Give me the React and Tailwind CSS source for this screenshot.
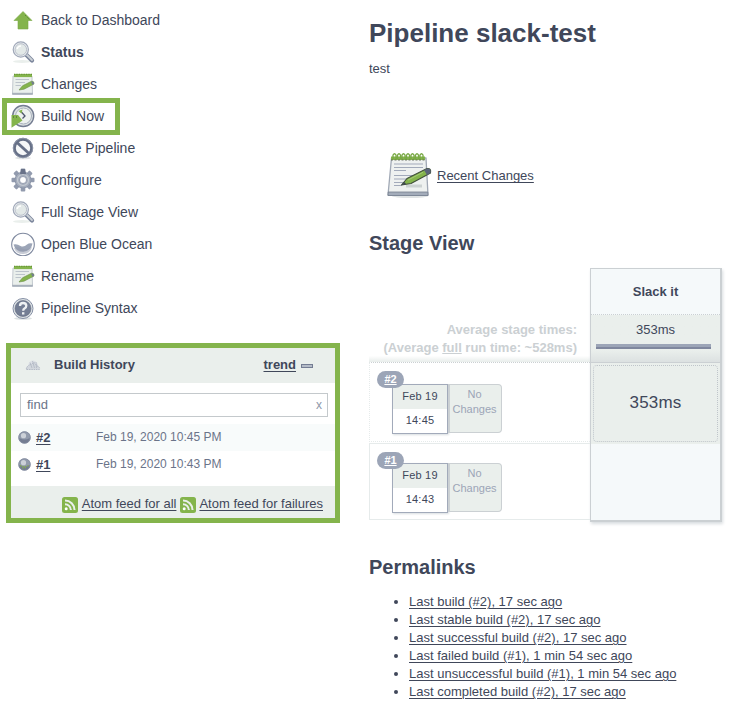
import React from "react";

const Arrow = () => (
  <svg width="24" height="24" viewBox="0 0 24 24">
    <path d="M12 3.500 L21 12.500 H17 V21 H7 V12.500 H3 Z" fill="#84b44c" stroke="#78a844" strokeWidth=".6" strokeLinejoin="round" />
    <path d="M14 7 l5 5" stroke="#47722c" strokeDasharray="1 1.500" />
  </svg>
);

const Search = () => (
  <svg width="24" height="24" viewBox="0 0 24 24">
    <ellipse cx="11" cy="21.500" rx="9" ry="1.500" fill="#eaefec" />
    <path d="M15.500 15 L21 20.500" stroke="#7c869c" strokeWidth="4.200" strokeLinecap="round" />
    <path d="M15.500 14.500 L21 20" stroke="#cbd0d6" strokeWidth="1.800" strokeLinecap="round" />
    <circle cx="9.800" cy="9.500" r="7.600" fill="#eef1f3" stroke="#a0a8b8" strokeWidth="1.200" />
    <circle cx="9.800" cy="9.500" r="5.800" fill="#e3e9e8" stroke="#b9bfca" />
    <path d="M6 9 Q7 6 10 6" stroke="#fff" strokeWidth="1.500" fill="none" />
  </svg>
);

const SmallNotepad = () => (
  <svg width="24" height="24" viewBox="0 0 24 24">
    <path d="M2 4 H21 L21.500 22 H1.500 Z" fill="#eaefec" stroke="#b5bcc4" strokeWidth=".8" />
    <path d="M1.200 20.800 H21.800 V22.800 H1.200 Z" fill="#a8b0bb" />
    <path d="M3 3.500 H21" stroke="#84b44c" strokeWidth="3.200" />
    <path d="M3 2.300 H21" stroke="#628d35" strokeWidth="1" strokeDasharray="1.200 1.200" />
    <path d="M4.500 7.500 H18 M4.500 10.500 H14 M4.500 13.500 H10" stroke="#bcc3cb" />
    <path d="M8 18 L11.500 13.800 L20.500 9.200 Q23.500 9 23 12 L13 17.200 Z" fill="#84b44c" stroke="#6b8f48" strokeWidth=".6" />
    <path d="M20 9.500 Q23.500 9 23 12 L21.500 12.800Z" fill="#747d92" />
  </svg>
);

const Notepad = () => (
  <svg width="48" height="48" viewBox="0 0 48 48">
    <ellipse cx="24" cy="45" rx="18" ry="2" fill="#dfe3e4" />
    <path d="M5.500 7 H40 L42 44 H2 Z" fill="#eef1f0" stroke="#a0a8b5" strokeWidth="1.300" strokeLinejoin="round" />
    <path d="M2.200 41 H41.800 L42 44.500 H2 Z" fill="#a3acba" stroke="#747d8e" strokeWidth=".8" />
    <path d="M5 5.500 H39 V9 H5 Z" fill="#84b44c" />
    <path d="M5 9 H39" stroke="#55614f" strokeWidth=".8" strokeDasharray="2 1.500" />
    <path d="M7 8 V4 q1.500-2.500 3 0 V8 M11.500 8 V4 q1.500-2.500 3 0 V8 M16 8 V4 q1.500-2.500 3 0 V8 M20.500 8 V4 q1.500-2.500 3 0 V8 M25 8 V4 q1.500-2.500 3 0 V8 M29.500 8 V4 q1.500-2.500 3 0 V8 M34 8 V4 q1.500-2.500 3 0 V8" fill="none" stroke="#78a844" strokeWidth="1.300" />
    <path d="M8 13 H37 M8 16.500 H37 M8 19.500 H20 M8 24.500 H30 M8 28 H26 M8 31.500 H20 M8 34.500 H16" stroke="#a2aaba" strokeWidth="1.100" />
    <path d="M20 35 H36" stroke="#ccd2d2" strokeWidth="3" />
    <path d="M15.500 34 L21 27.500 L41 17.500 Q45.500 17 44.500 22 L25 32.500 Z" fill="#84b44c" stroke="#3f4e3a" strokeWidth="1.100" strokeLinejoin="round" />
    <path d="M38 19 L41 17.500 Q45.500 17 44.500 22 L41 24 Z" fill="#5b647a" />
    <path d="M22 29 L37 21.300" stroke="#b3d687" strokeWidth=".7" />
    <path d="M15.500 34 l3-3 1.500 2 Z" fill="#3e4557" />
  </svg>
);

const Clock = () => (
  <svg width="24" height="24" viewBox="0 0 24 24">
    <circle cx="12.200" cy="12" r="10.500" fill="#dde2e3" stroke="#737c91" strokeWidth="1.400" />
    <circle cx="12.500" cy="12" r="8" fill="#edf1ef" stroke="#a8b0bd" />
    <path d="M9.500 7 L14 12 L11.500 14.500" fill="none" stroke="#4c556b" strokeWidth="1.300" />
    <path d="M7.500 7 L11.500 5.500 L10.500 9.500 Z" fill="#84b44c" />
    <path d="M.5 11 H7 L11.500 16.500 L.5 23.800 Z" fill="#84b44c" />
    <path d="M2 13 h6" stroke="#3f5732" strokeDasharray="1 2" />
  </svg>
);

const Forbidden = () => (
  <svg width="24" height="24" viewBox="0 0 24 24">
    <ellipse cx="12" cy="22" rx="8" ry="1.300" fill="#e1e5e6" />
    <circle cx="12" cy="12" r="8.700" fill="#f5f7f8" stroke="#667087" strokeWidth="3" />
    <path d="M6 6.500 L18 17.500" stroke="#667087" strokeWidth="2.900" />
    <circle cx="12" cy="12" r="9.700" fill="none" stroke="#939bad" strokeWidth=".8" />
  </svg>
);

const Gear = () => (
  <svg width="24" height="24" viewBox="0 0 24 24">
    <g fill="#929bae">
      <rect x="9.700" y=".5" width="4.600" height="23" rx="1" />
      <rect x="9.700" y=".5" width="4.600" height="23" rx="1" transform="rotate(45 12 12)" />
      <rect x="9.700" y=".5" width="4.600" height="23" rx="1" transform="rotate(90 12 12)" />
      <rect x="9.700" y=".5" width="4.600" height="23" rx="1" transform="rotate(135 12 12)" />
    </g>
    <circle cx="12" cy="12" r="8" fill="#a5adbc" stroke="#8790a5" strokeWidth=".8" />
    <path d="M10 1 h4 l1 5 q-3 2-6 0Z" fill="#697289" />
    <circle cx="12" cy="12" r="5.500" fill="none" stroke="#c4cad2" strokeWidth="1.200" />
    <circle cx="12" cy="12" r="3.500" fill="#fff" stroke="#7c869c" strokeWidth=".7" />
  </svg>
);

const Ocean = () => (
  <svg width="24" height="24" viewBox="0 0 24 24">
    <circle cx="12" cy="12.500" r="11.300" fill="#fff" stroke="#7f899f" strokeWidth="1.100" />
    <path d="M2.500 12.500 Q6 11.500 9.500 14 Q13 15.500 16 12.500 Q18.500 10.500 21.500 11.500 A9.700 9.700 0 0 1 2.500 12.500Z" fill="#9ca5b7" />
    <path d="M3 16 Q7 14.500 11 16.500 T21 15 A9.500 9.500 0 0 1 3 16Z" fill="#8f98ac" opacity=".5" />
  </svg>
);

const Help = () => (
  <svg width="24" height="24" viewBox="0 0 24 24">
    <ellipse cx="12" cy="22.500" rx="9" ry="1.300" fill="#dde2e3" />
    <circle cx="12" cy="12.500" r="10" fill="#dfe4e6" stroke="#858fa5" />
    <circle cx="12" cy="12.500" r="8" fill="#747e94" stroke="#5f687e" strokeWidth=".6" />
    <path d="M9 10 Q9 7 12 7 Q15.300 7 15.300 9.800 Q15.300 11.500 13.500 12.500 Q12.200 13.200 12.200 14.800" fill="none" stroke="#eef1f3" strokeWidth="2.300" />
    <rect x="11" y="16.200" width="2.400" height="2.300" fill="#eef1f3" />
  </svg>
);

const Weather = () => (
  <svg width="16" height="16" viewBox="0 0 16 16">
    <path d="M3 9 Q4 3 8.500 3.500 Q13 4 14 12 H2 Q0 10 3 9Z" fill="#dde1e6" />
    <path d="M1.500 12.500 Q1 9.500 3.500 9.500 Q4 6.500 7 7.500 Q8.500 4 10.500 7 L12 9 Q15 9.500 14.500 12.500Z" fill="#d2d7dd" stroke="#a9b0be" strokeWidth=".8" strokeDasharray="1.500 .8" />
    <path d="M7.500 4 L9.500 11 M5 5.500 L7 11 M11 5 L11.500 11" stroke="#aab1bf" strokeWidth=".7" />
  </svg>
);

const Ball = ({ green }) => (
  <svg width="13" height="13" viewBox="0 0 13 13">
    <circle cx="6.500" cy="6.500" r="5.900" fill="#929bac" stroke="#7c859a" strokeWidth=".8" />
    <path d="M1.200 7 Q6.500 10 11.800 7 Q11 12 6.500 12 Q2 12 1.200 7Z" fill="#747d92" />
    {green && <path d="M2 7.500 Q6.500 10 11.500 7 M4 10 l5-.5" fill="none" stroke="#84a957" strokeWidth="1.200" strokeDasharray="1.500 1" />}
    <circle cx="5.500" cy="4.700" r="2.600" fill="#ccd1d8" />
  </svg>
);

const Feed = () => (
  <svg className="relative top-px shrink-0" width="16" height="16" viewBox="0 0 16 16">
    <rect width="16" height="16" rx="2.500" fill="#84b44c" />
    <circle cx="4.200" cy="11.800" r="1.500" fill="#fff" />
    <path d="M3 7.200 A5.800 5.800 0 0 1 8.800 13 M3 3.500 A9.500 9.500 0 0 1 12.500 13" fill="none" stroke="#eaefec" strokeWidth="2" />
  </svg>
);

const menu = [
  [Arrow, "Back to Dashboard"],
  [Search, "Status"],
  [SmallNotepad, "Changes"],
  [Clock, "Build Now"],
  [Forbidden, "Delete Pipeline"],
  [Gear, "Configure"],
  [Search, "Full Stage View"],
  [Ocean, "Open Blue Ocean"],
  [SmallNotepad, "Rename"],
  [Help, "Pipeline Syntax"],
];

const links = [
  "Last build (#2), 17 sec ago",
  "Last stable build (#2), 17 sec ago",
  "Last successful build (#2), 17 sec ago",
  "Last failed build (#1), 1 min 54 sec ago",
  "Last unsuccessful build (#1), 1 min 54 sec ago",
  "Last completed build (#2), 17 sec ago",
];

const linkClass = "underline underline-offset-2 decoration-1";

function BuildHistory() {
  return (
    <section className="ml-1.5 mt-[19px] h-[180px] w-[334px] border-[5px] border-[#84b44c] bg-white text-[13px]">
      <header className="flex h-[35px] items-center bg-[#eaefec] pb-0.5 pl-[14px] pr-[22px] font-bold">
        <Weather />
        <span className="ml-[13px] grow">Build History</span>
        <span className={linkClass}>trend</span>
        <span className="ml-[5px] mt-[3px] h-1 w-3 border border-[#747d93] bg-[#b5bcc8]" />
      </header>
      <div className="ml-[9px] mr-[7px] mt-[10px] flex h-6 items-center justify-between border border-[#c4c9cc] pl-1.5 pr-[5px] text-[#6b7489]">
        <span>find</span>
        <span className="text-xs text-[#8e97aa]">x</span>
      </div>
      <div className="mt-[7px]">
        {[["#2", "Feb 19, 2020 10:45 PM", "bg-[#f8fbfb]"], ["#1", "Feb 19, 2020 10:43 PM", ""]].map(([id, date, bg]) => (
          <div key={id} className={"flex h-[27px] items-center pl-[7px] " + bg}>
            <Ball green={id === "#1"} />
            <span className={"ml-[5px] w-[60px] font-bold " + linkClass}>{id}</span>
            <span className="-mt-px text-[12px] text-[#6b7489]">{date}</span>
          </div>
        ))}
      </div>
      <footer className="mt-2 flex h-8 items-center justify-end bg-[#eaefec] pr-3 pt-1">
        <Feed />
        <span className={"ml-1 " + linkClass}>Atom feed for all</span>
        <span className="w-1" />
        <Feed />
        <span className={"ml-[3px] " + linkClass}>Atom feed for failures</span>
      </footer>
    </section>
  );
}

function Run({ id, time, row }) {
  return (
    <div className={"relative border-b border-l border-[#e6ebeb] pl-[22px] " + row}>
      <div className="flex items-start">
        <div className="h-[50px] w-14 border border-[#a2aaba] bg-white text-center text-[11px] tracking-[.2px] shadow-[1px_1px_2px_#d8dde0]">
          <div className="h-6 bg-[#eaefec] leading-[23px]">Feb 19</div>
          <div className="leading-[23px]">{time}</div>
        </div>
        <div className="h-[49px] w-[54px] rounded-r border border-l-2 border-[#cbd0d3] bg-[#eaefec] pr-0.5 pt-0.5 text-center text-[11px] leading-[15px] text-[#9ca5b7]">
          No<br />Changes
        </div>
      </div>
      <div className="absolute left-[7px] top-[8px] flex h-[17px] w-[27px] items-center justify-center rounded-full bg-[#9ca5b7] text-[11px] font-bold text-white underline">
        {id}
      </div>
    </div>
  );
}

function StageView() {
  return (
    <div className="mt-3 flex items-start">
      <div className="w-[221px] pt-[53px]">
        <div className="h-[41px] whitespace-nowrap bg-linear-to-b from-white from-85% to-[#e8edeb] pr-[13px] text-right text-[13px] font-bold leading-[18px] text-[#cbd0d3]">
          Average stage times:<br />(Average <span className="underline">full</span> run time: ~528ms)
        </div>
        <Run id="#2" time="14:45" row="h-[80px] border-t border-dotted border-t-[#cbd0d3] pt-[21px]" />
        <Run id="#1" time="14:43" row="mt-px h-[77px] border-t pt-[19px]" />
      </div>
      <div className="h-[254px] w-[132px] border border-r-2 border-b-2 border-[#cbd0d3] bg-[#f5f9fa] text-center shadow-[1px_2px_3px_#d8dde0]">
        <div className="h-[46px] border-b border-dotted border-[#cbd0d3] text-[13px] font-bold leading-[46px]">Slack it</div>
        <div className="h-12 border-b border-[#cbd0d3] bg-linear-to-b from-[#eaefec] from-75% to-[#dce1e1] px-[5px] text-[13px] leading-[29px]">
          353ms
          <div className="mr-1 h-[5px] border-b-2 border-[#7f879e] bg-[#9ca5b7]" />
        </div>
        <div className="h-[81px] bg-[#eaefec] px-0.5 pt-[2px]">
          <div className="h-[77px] rounded border border-dotted border-[#bfc5ca] text-[17px] leading-[73px] tracking-[.2px]">353ms</div>
        </div>
      </div>
    </div>
  );
}

export default function App() {
  return (
    <div className="flex h-[725px] w-[746px] overflow-hidden bg-white text-[13px] text-[#40475a] [font-family:'Liberation_Sans',Arial,sans-serif]">
      <aside className="w-[369px] shrink-0 pt-1">
        <nav>
          {menu.map(([Icon, label]) => (
            <div key={label} className={"relative flex h-8 items-center gap-1.5 pl-[11px] text-sm " + (label === "Status" ? "font-bold" : "")}>
              <Icon />
              <span>{label}</span>
              {label === "Build Now" && <div className="absolute -top-0.5 left-0.5 h-[37px] w-[118px] border-[5px] border-[#84b44c]" />}
            </div>
          ))}
        </nav>
        <BuildHistory />
      </aside>
      <main className="grow pt-[18px]">
        <h1 className="text-[26px] font-bold leading-[30px]">Pipeline slack-test</h1>
        <p className="mt-3 leading-[18px]">test</p>
        <div className="mt-[73px] flex items-center gap-0.5 pl-[17px]">
          <Notepad />
          <span className={"ml-px pt-0.5 " + linkClass}>Recent Changes</span>
        </div>
        <h2 className="mt-8 text-[20px] font-bold leading-[25px]">Stage View</h2>
        <StageView />
        <h2 className="mt-[33px] text-[20px] font-bold leading-[25px]">Permalinks</h2>
        <ul className="ml-10 mt-[13px] list-disc leading-[18px]">
          {links.map((t) => <li key={t}><span className={linkClass}>{t}</span></li>)}
        </ul>
      </main>
    </div>
  );
}
